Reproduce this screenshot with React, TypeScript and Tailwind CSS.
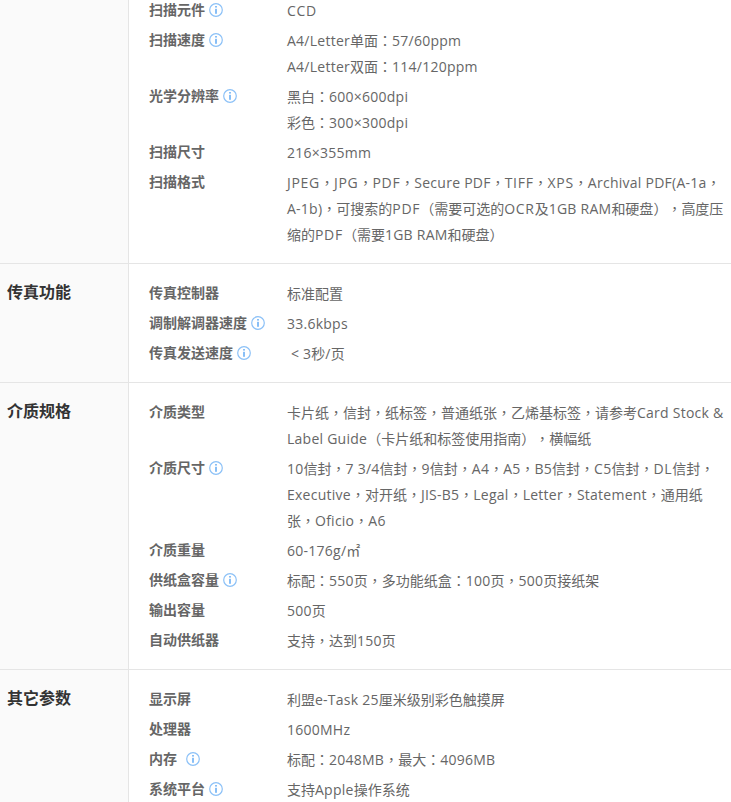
import React from 'react';

type Row = { label: string; info?: boolean; gap?: string; value: string[] };
type Section = { title: string; rows: Row[] };

const sections: Section[] = [
  {
    title: '',
    rows: [
      { label: '扫描元件', info: true, value: ['CCD'] },
      { label: '扫描速度', info: true, value: ['A4/Letter单面：57/60ppm', 'A4/Letter双面：114/120ppm'] },
      { label: '光学分辨率', info: true, value: ['黑白：600×600dpi', '彩色：300×300dpi'] },
      { label: '扫描尺寸', value: ['216×355mm'] },
      {
        label: '扫描格式',
        value: [
          'JPEG，JPG，PDF，Secure PDF，TIFF，XPS，Archival PDF(A-1a，',
          'A-1b)，可搜索的PDF（需要可选的OCR及1GB RAM和硬盘），高度压',
          '缩的PDF（需要1GB RAM和硬盘）',
        ],
      },
    ],
  },
  {
    title: '传真功能',
    rows: [
      { label: '传真控制器', value: ['标准配置'] },
      { label: '调制解调器速度', info: true, value: ['33.6kbps'] },
      { label: '传真发送速度', info: true, value: ['\u00a0< 3秒/页'] },
    ],
  },
  {
    title: '介质规格',
    rows: [
      {
        label: '介质类型',
        value: ['卡片纸，信封，纸标签，普通纸张，乙烯基标签，请参考Card Stock &', 'Label Guide（卡片纸和标签使用指南），横幅纸'],
      },
      {
        label: '介质尺寸',
        info: true,
        value: [
          '10信封，7 3/4信封，9信封，A4，A5，B5信封，C5信封，DL信封，',
          'Executive，对开纸，JIS-B5，Legal，Letter，Statement，通用纸',
          '张，Oficio，A6',
        ],
      },
      { label: '介质重量', value: ['60-176g/㎡'] },
      { label: '供纸盒容量', info: true, value: ['标配：550页，多功能纸盒：100页，500页接纸架'] },
      { label: '输出容量', value: ['500页'] },
      { label: '自动供纸器', value: ['支持，达到150页'] },
    ],
  },
  {
    title: '其它参数',
    rows: [
      { label: '显示屏', value: ['利盟e-Task 25厘米级别彩色触摸屏'] },
      { label: '处理器', value: ['1600MHz'] },
      { label: '内存', info: true, gap: 'ml-[9px]', value: ['标配：2048MB，最大：4096MB'] },
      { label: '系统平台', info: true, value: ['支持Apple操作系统'] },
    ],
  },
];

// the reference centres its full-width punctuation and runs latin slightly wider
function ValueLine({ text }: { text: string }) {
  const parts = text.split(/([，：（）]|[\u0020-\u024f]+)/).filter(Boolean);
  return (
    <div className="h-[26px]">
      {parts.map((part, i) => {
        if (/[，：（）]/.test(part)) {
          return <span key={i} className="font-['Noto_Sans_CJK_TC',sans-serif] leading-none">{part}</span>;
        }
        if (/^[A-Z]+$/.test(part)) {
          return <span key={i} className="tracking-[0.7px]">{part}</span>;
        }
        if (/^[\u0020-\u024f]+$/.test(part)) {
          return <span key={i} className="tracking-[0.25px]">{part}</span>;
        }
        return <span key={i}>{part}</span>;
      })}
    </div>
  );
}

function InfoIcon({ className }: { className: string }) {
  return (
    <svg width="14" height="14" viewBox="0 0 14 14" fill="none" className={className}>
      <circle cx="7" cy="7" r="6.3" stroke="#8cc1f7" strokeWidth="1.2" />
      <rect x="6.2" y="3" width="1.6" height="1.6" fill="#6cb0f5" />
      <rect x="6.2" y="5.8" width="1.6" height="5" fill="#6cb0f5" />
    </svg>
  );
}

export default function App() {
  return (
    <div className="h-[802px] w-[731px] overflow-hidden bg-white font-['Open_Sans','Noto_Sans_CJK_SC',sans-serif] text-sm [text-spacing-trim:space-all]">
      {sections.map((section, i) => (
        <div key={i} className={`flex ${i > 0 ? 'border-t border-[#e5e5e5]' : '-mt-[2px]'}`}>
          <div className="w-[128px] shrink-0 bg-[#fafafa] pl-[7px] pt-[15px] text-base font-bold leading-[26px] text-[#333]">
            {section.title}
          </div>
          <div className={`flex flex-1 flex-col gap-[4px] border-l border-[#e5e5e5] pl-5 ${i > 0 ? 'pt-[17px] pb-[15px]' : 'pb-[15px]'}`}>
            {section.rows.map((row) => (
              <div key={row.label} className="flex">
                <div className="flex h-[26px] w-[138px] shrink-0 items-center pb-[2px] font-bold text-[#666]">
                  {row.label}
                  {row.info && <InfoIcon className={row.gap ?? 'ml-[4px]'} />}
                </div>
                <div className="whitespace-nowrap leading-[26px] text-[#666]">
                  {row.value.map((line) => (
                    <ValueLine key={line} text={line} />
                  ))}
                </div>
              </div>
            ))}
          </div>
        </div>
      ))}
    </div>
  );
}
